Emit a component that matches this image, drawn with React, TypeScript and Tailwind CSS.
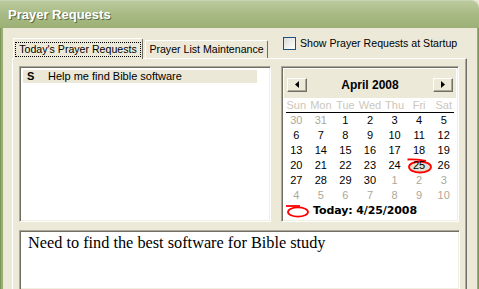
import React from "react";

const weeks: [number, boolean][][] = [
  [[30, true], [31, true], [1, false], [2, false], [3, false], [4, false], [5, false]],
  [[6, false], [7, false], [8, false], [9, false], [10, false], [11, false], [12, false]],
  [[13, false], [14, false], [15, false], [16, false], [17, false], [18, false], [19, false]],
  [[20, false], [21, false], [22, false], [23, false], [24, false], [25, false], [26, false]],
  [[27, false], [28, false], [29, false], [30, false], [1, true], [2, true], [3, true]],
  [[4, true], [5, true], [6, true], [7, true], [8, true], [9, true], [10, true]],
];

const days = ["Sun", "Mon", "Tue", "Wed", "Thu", "Fri", "Sat"];

const sunken =
  "border border-t-[#ACA899] border-l-[#ACA899] border-b-white border-r-white shadow-[inset_1px_1px_0_#716F64,inset_-1px_-1px_0_#F1EFE2]";

function ArrowBtn({ dir }: { dir: "l" | "r" }) {
  return (
    <div className="w-[20px] h-[14px] bg-[#ECE9D8] border border-t-white border-l-white border-b-[#716F64] border-r-[#716F64] shadow-[inset_-1px_-1px_0_#ACA899] flex items-center justify-center">
      <svg width="4" height="7" viewBox="0 0 4 7">
        {dir === "l" ? (
          <path d="M4 0 L0 3.5 L4 7 Z" fill="#000" />
        ) : (
          <path d="M0 0 L4 3.5 L0 7 Z" fill="#000" />
        )}
      </svg>
    </div>
  );
}

export default function App() {
  return (
    <div className="w-[479px] h-[289px] overflow-hidden flex flex-col bg-[#ECE9D8] font-['Liberation_Sans',Arial,sans-serif] text-[10.6px] text-black">
      {/* Title bar */}
      <div className="h-[28px] shrink-0 rounded-tr-[8px] bg-gradient-to-b from-[#BCCB9E] via-[#A7BA83] to-[#9CB076] border-t border-[#C9D5B0] flex items-center pl-[8px]">
        <span className="font-bold text-[13px] text-white [text-shadow:1px_1px_0_#5E6C3F]">
          Prayer Requests
        </span>
      </div>
      <div className="flex-1 flex min-h-0">
        <div className="w-[3px] shrink-0 bg-[#97AD73] border-l border-[#7F965A]" />
        <div className="flex-1 flex flex-col min-w-0 pr-[10px]">
          {/* Tabs row */}
          <div className="h-[30px] shrink-0 flex items-end pl-[10px]">
            <div className="relative z-10 shrink-0 h-[21px] w-[130px] bg-[#ECE9D8] border-t border-l border-white border-r border-r-[#716F64] rounded-t-[2px] flex items-center justify-center mb-[-1px]">
              <div className="border border-dotted border-black w-[126px] h-[15px] flex items-center justify-center leading-none whitespace-nowrap">
                Today's Prayer Requests
              </div>
            </div>
            <div className="shrink-0 h-[18px] w-[123px] ml-[2px] bg-[#ECE9D8] border-t border-l border-white border-r border-r-[#716F64] rounded-t-[2px] flex items-center justify-center leading-none whitespace-nowrap">
              Prayer List Maintenance
            </div>
            <label className="self-start mt-[9px] ml-[15px] flex items-center gap-[4px] whitespace-nowrap">
              <span className="w-[13px] h-[13px] shrink-0 border border-[#1C5180] bg-gradient-to-br from-[#DCDCD7] to-white" />
              <span className="leading-none">Show Prayer Requests at Startup</span>
            </label>
          </div>
          {/* Tab page */}
          <div className="flex-1 ml-[9px] border-t border-l border-white border-r border-r-[#716F64] shadow-[inset_-1px_0_0_#ACA899] px-[6px] pt-[7px] flex flex-col min-h-0">
            <div className="flex gap-[10px] h-[156px] shrink-0">
              {/* List */}
              <div className={`w-[252px] bg-white ${sunken} p-[2px]`}>
                <div className="mt-[1px] ml-[1px] w-[234px] h-[13px] bg-[#EBE8D8] flex items-center text-[11px]">
                  <span className="font-bold w-[25px] pl-[4px]">S</span>
                  <span>Help me find Bible software</span>
                </div>
              </div>
              {/* Calendar */}
              <div className={`w-[178px] bg-white ${sunken} p-[2px] flex flex-col text-[11px]`}>
                <div className="h-[30px] bg-[#ECE9D8] flex items-center justify-between px-[3px] pt-[2px]">
                  <ArrowBtn dir="l" />
                  <span className="font-bold text-[12px]">April 2008</span>
                  <ArrowBtn dir="r" />
                </div>
                <div className="grid grid-cols-7 h-[14px] items-center text-[#CBC7BA]">
                  {days.map((d) => (
                    <span key={d} className="text-center leading-none">
                      {d}
                    </span>
                  ))}
                </div>
                <div className="h-px bg-black mx-[2px]" />
                {weeks.map((w, i) => (
                  <div key={i} className="grid grid-cols-7 h-[15px] items-center">
                    {w.map(([n, gray], j) => {
                      const today = i === 3 && j === 5;
                      return (
                        <div
                          key={j}
                          className={`relative h-[15px] flex items-center justify-center leading-none ${
                            gray ? "text-[#ACA899]" : "text-black"
                          }`}
                        >
                          {today && (
                            <svg
                              className="absolute left-0 top-0 overflow-visible"
                              width="25"
                              height="15"
                              viewBox="0 0 25 15"
                            >
                              <ellipse cx="13" cy="9" rx="11" ry="5.5" fill="#E4E1D1" stroke="#FF0000" strokeWidth="1.8" />
                              <path d="M0.5 1.5 Q8 1 19 2.8" fill="none" stroke="#FF0000" strokeWidth="1.8" />
                            </svg>
                          )}
                          <span className="relative">{n}</span>
                        </div>
                      );
                    })}
                  </div>
                ))}
                <div className="h-[16px] flex items-center pl-[1px] gap-[4px]">
                  <svg width="24" height="14" viewBox="0 0 24 14">
                    <ellipse cx="13" cy="8" rx="10" ry="4.6" fill="none" stroke="#FF0000" strokeWidth="1.8" />
                    <path d="M1 2 L15 2" stroke="#FF0000" strokeWidth="1.8" />
                  </svg>
                  <span className="font-bold font-['DejaVu_Sans',sans-serif] text-[11px] tracking-[-0.1px]">
                    Today: 4/25/2008
                  </span>
                </div>
              </div>
            </div>
            {/* Text box */}
            <div className={`mt-[8px] flex-1 bg-white ${sunken} border-b-0 pl-[8px] pt-[3px]`}>
              <div className="font-['Liberation_Serif','Times_New_Roman',serif] text-[16.3px] leading-[18px] whitespace-nowrap">
                Need to find the best software for Bible study
              </div>
            </div>
          </div>
        </div>
        <div className="w-[2px] shrink-0 bg-[#97AD73] border-r border-[#7F965A]" />
      </div>
    </div>
  );
}
